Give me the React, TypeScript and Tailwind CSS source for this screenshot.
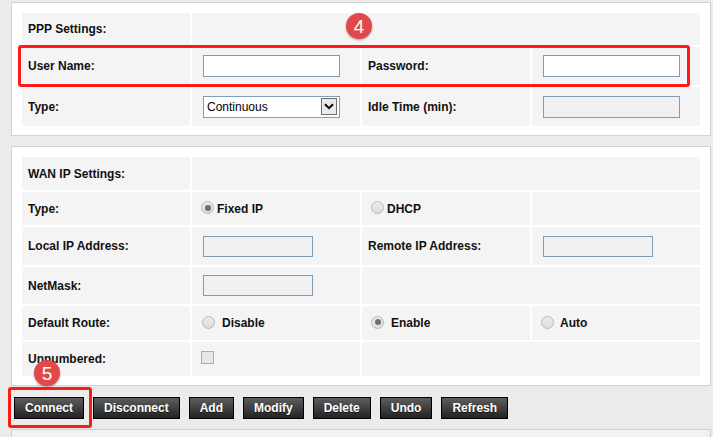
import React from 'react'

const cell = 'bg-[#f4f4f4] flex items-center'
const label = 'bg-[#f4f4f4] flex items-center pl-[6px] font-bold text-[12px] text-[#111]'

function TextBox({ disabled = false, w = 'w-[137px]', h = 'h-[22px]' }: { disabled?: boolean; w?: string; h?: string }) {
  return <div className={`${w} ${h} border border-[#7f9db9] ${disabled ? 'bg-[#f0f0f0]' : 'bg-white'}`} />
}

function Radio({ checked = false }: { checked?: boolean }) {
  return (
    <span className="w-[13px] h-[13px] rounded-full border border-[#b9b9b9] bg-linear-to-b from-[#ececec] to-[#dcdcdc] flex items-center justify-center shrink-0 -translate-y-[1px]">
      {checked && <span className="w-[6px] h-[6px] rounded-full bg-[#6e6e6e]" />}
    </span>
  )
}

function Badge({ n }: { n: string }) {
  return (
    <div className="w-[26px] h-[26px] rounded-full bg-[#e2484a] shadow-[0_1px_2px_rgba(0,0,0,0.35)] flex items-center justify-center text-white text-[19px] leading-none">
      {n}
    </div>
  )
}

const buttons = ['Connect', 'Disconnect', 'Add', 'Modify', 'Delete', 'Undo', 'Refresh']

export default function App() {
  return (
    <div className="relative w-[713px] h-[437px] overflow-hidden bg-[#ebebeb] font-['Liberation_Sans',Arial,sans-serif]">
      <div className="pt-[2px] pl-[11px] pr-[2px]">
        {/* PPP Settings */}
        <div className="border border-[#d2d2d2] bg-white px-[10px] pt-[10px] pb-[9px]">
          <div className="grid grid-cols-[168px_168px_168px_168px] grid-rows-[32px_38px_39px] gap-[2px]">
            <div className={label}>PPP Settings:</div>
            <div className={`${cell} col-span-3`} />

            <div className={label}>User Name:</div>
            <div className={`${cell} pl-[11px]`}>
              <TextBox />
            </div>
            <div className={label}>Password:</div>
            <div className={`${cell} pl-[11px]`}>
              <TextBox />
            </div>

            <div className={label}>Type:</div>
            <div className={`${cell} pl-[11px]`}>
              <div className="w-[137px] h-[22px] border border-[#7f9db9] bg-white flex items-center justify-between pl-[3px] pr-[2px]">
                <span className="text-[12px] text-black">Continuous</span>
                <span className="w-[16px] h-[17px] border border-[#707070] bg-[#e9e9e9] flex items-center justify-center">
                  <svg width="10" height="7" viewBox="0 0 10 7">
                    <path d="M1 1.2 L5 5.2 L9 1.2" fill="none" stroke="#000" strokeWidth="2" />
                  </svg>
                </span>
              </div>
            </div>
            <div className={label}>Idle Time (min):</div>
            <div className={`${cell} pl-[11px]`}>
              <TextBox disabled />
            </div>
          </div>
        </div>

        {/* WAN IP Settings */}
        <div className="mt-[10px] border border-[#d2d2d2] bg-white px-[10px] pt-[10px] pb-[9px]">
          <div className="grid grid-cols-[168px_168px_168px_168px] grid-rows-[33px_33px_38px_37px_34px_34px] gap-[2px]">
            <div className={label}>WAN IP Settings:</div>
            <div className={`${cell} col-span-3`} />

            <div className={label}>Type:</div>
            <div className={`${cell} pl-[9px] gap-[3px]`}>
              <Radio checked />
              <span className="font-bold text-[12px] text-[#111]">Fixed IP</span>
            </div>
            <div className={`${cell} pl-[9px] gap-[3px]`}>
              <Radio />
              <span className="font-bold text-[12px] text-[#111]">DHCP</span>
            </div>
            <div className={cell} />

            <div className={label}>Local IP Address:</div>
            <div className={`${cell} pl-[11px]`}>
              <TextBox disabled w="w-[110px]" h="h-[21px]" />
            </div>
            <div className={label}>Remote IP Address:</div>
            <div className={`${cell} pl-[11px]`}>
              <TextBox disabled w="w-[110px]" h="h-[21px]" />
            </div>

            <div className={label}>NetMask:</div>
            <div className={`${cell} pl-[11px]`}>
              <TextBox disabled w="w-[110px]" h="h-[21px]" />
            </div>
            <div className={`${cell} col-span-2`} />

            <div className={label}>Default Route:</div>
            <div className={`${cell} pl-[10px] gap-[7px]`}>
              <Radio />
              <span className="font-bold text-[12px] text-[#111]">Disable</span>
            </div>
            <div className={`${cell} pl-[9px] gap-[7px]`}>
              <Radio checked />
              <span className="font-bold text-[12px] text-[#111]">Enable</span>
            </div>
            <div className={`${cell} pl-[9px] gap-[6px]`}>
              <Radio />
              <span className="font-bold text-[12px] text-[#111]">Auto</span>
            </div>

            <div className={label}>Unnumbered:</div>
            <div className={`${cell} pl-[9px]`}>
              <span className="w-[13px] h-[13px] border border-[#ababab] bg-[#e6e6e6] -translate-y-[2px]" />
            </div>
            <div className={`${cell} col-span-2`} />
          </div>
        </div>
      </div>

      {/* Buttons */}
      <div className="flex gap-[9px] pl-[14px] mt-[11px]">
        {buttons.map((b) => (
          <button
            key={b}
            className="h-[22px] px-[10px] border border-black bg-linear-to-b from-[#5e5e5e] to-[#232323] text-white font-bold text-[12px] leading-none [text-shadow:0_1px_0_rgba(0,0,0,0.6)]"
          >
            {b}
          </button>
        ))}
      </div>

      {/* next panel */}
      <div className="ml-[11px] mr-[2px] mt-[10px] h-[20px] border-t border-x border-[#cfcfcf] bg-[#f1f1f1]" />

      {/* annotations */}
      <div className="absolute left-[18px] top-[45px] w-[672px] h-[42px] border-[3px] border-[#ff1a1a] rounded-[3px]" />
      <div className="absolute left-[346px] top-[13px]">
        <Badge n="4" />
      </div>
      <div className="absolute left-[8px] top-[387px] w-[84px] h-[41px] border-[3px] border-[#ff1a1a] rounded-[3px]" />
      <div className="absolute left-[34px] top-[360px]">
        <Badge n="5" />
      </div>
    </div>
  )
}
